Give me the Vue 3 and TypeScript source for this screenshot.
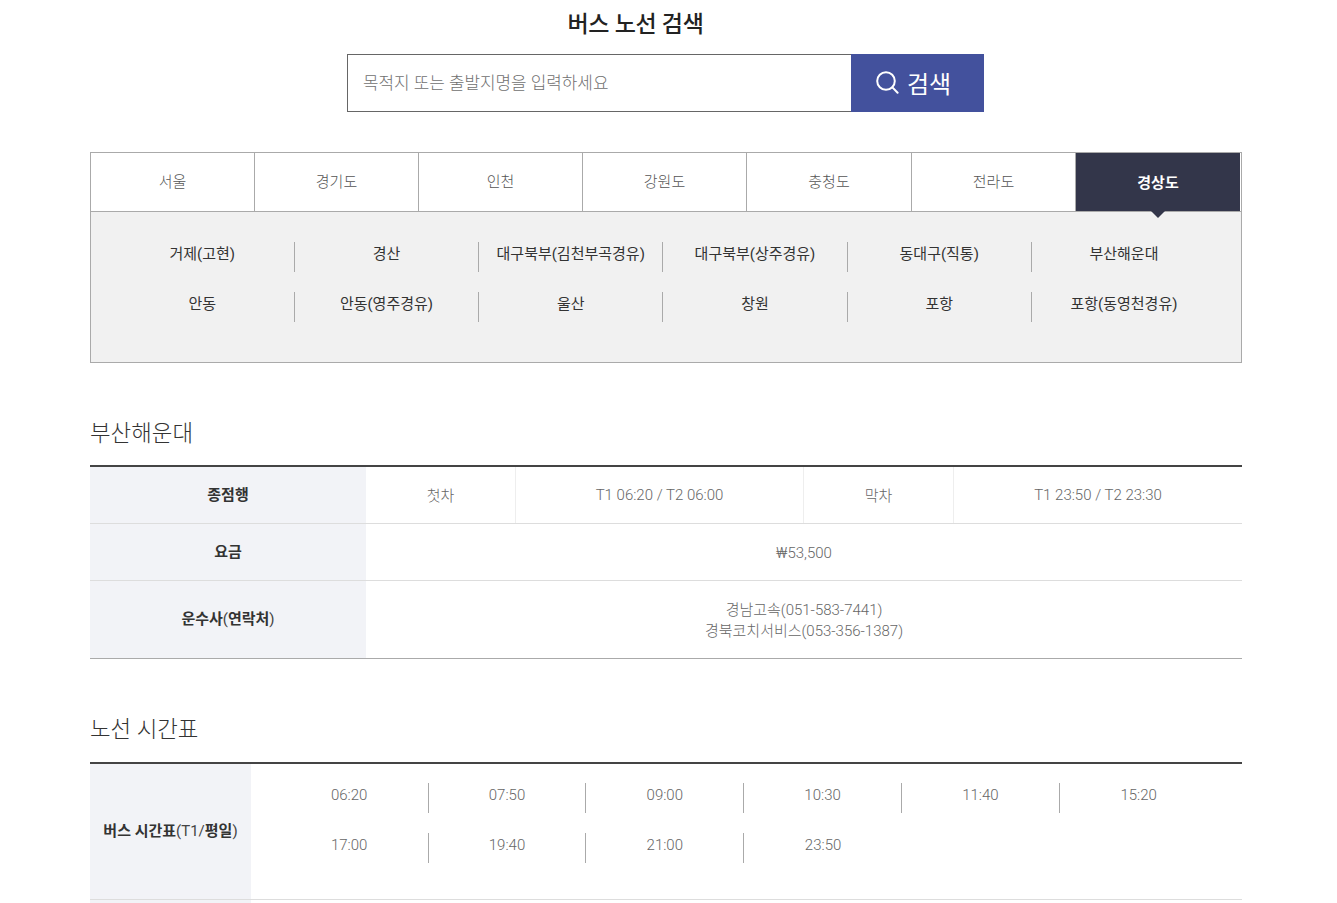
<script setup lang="ts">
const regions: string[] = ['서울', '경기도', '인천', '강원도', '충청도', '전라도', '경상도']
const activeRegion = '경상도'
const routes: string[] = [
  '거제(고현)', '경산', '대구북부(김천부곡경유)', '대구북부(상주경유)', '동대구(직통)', '부산해운대',
  '안동', '안동(영주경유)', '울산', '창원', '포항', '포항(동영천경유)'
]
const times: string[] = ['06:20', '07:50', '09:00', '10:30', '11:40', '15:20', '17:00', '19:40', '21:00', '23:50']
</script>

<template>
  <div class="page">
    <h1 class="title">버스 노선 검색</h1>
    <form class="search" @submit.prevent>
      <input class="search-input" type="text" placeholder="목적지 또는 출발지명을 입력하세요" />
      <button class="search-btn" type="submit">
        <svg width="24" height="24" viewBox="0 0 24 24" fill="none" stroke="#fff" stroke-width="2">
          <circle cx="11" cy="11" r="8.8" />
          <path d="M17.4 17.4 L22.6 22.8" stroke-linecap="round" />
        </svg>
        <span>검색</span>
      </button>
    </form>

    <section class="picker">
      <ul class="tabs">
        <li v-for="r in regions" :key="r" class="tab" :class="{ active: r === activeRegion }">{{ r }}</li>
      </ul>
      <ul class="routes">
        <li v-for="(r, i) in routes" :key="r" class="route" :class="{ last: (i + 1) % 6 === 0 }">{{ r }}</li>
      </ul>
    </section>

    <h2 class="heading first">부산해운대</h2>
    <div class="info">
      <div class="row three">
        <div class="th">종점행</div>
        <div class="td bordered hangul">첫차</div>
        <div class="td bordered">T1 06:20 / T2 06:00</div>
        <div class="td bordered hangul">막차</div>
        <div class="td">T1 23:50 / T2 23:30</div>
      </div>
      <div class="row">
        <div class="th">요금</div>
        <div class="td lowered">₩53,500</div>
      </div>
      <div class="row tall">
        <div class="th"><span>운수사<i>(</i>연락처<i>)</i></span></div>
        <div class="td stack lowered">
          <span>경남고속(051-583-7441)</span>
          <span>경북코치서비스(053-356-1387)</span>
        </div>
      </div>
    </div>

    <h2 class="heading second">노선 시간표</h2>
    <div class="schedule">
      <div class="sched-row">
        <div class="th"><span>버스 시간표<i>(T1/</i>평일<i>)</i></span></div>
        <ul class="times">
          <li v-for="(t, i) in times" :key="t" class="time" :class="{ last: (i + 1) % 6 === 0 || i === times.length - 1 }">{{ t }}</li>
        </ul>
      </div>
      <div class="sched-row">
        <div class="th"></div>
        <div></div>
      </div>
    </div>
  </div>
</template>

<style>
html, body { overflow: hidden; background: #fff; }
</style>

<style scoped>
* { box-sizing: border-box; }
ul { list-style: none; margin: 0; padding: 0; }
.page {
  width: 1152px;
  height: 903px;
  margin-left: 90px;
  overflow: hidden;
  font-family: Roboto, "Noto Sans CJK KR", sans-serif;
  font-size: 15px;
  font-weight: 300;
  color: #444;
}
.title {
  margin: 0;
  padding-right: 61px;
  height: 54px;
  padding-top: 8px;
  font-size: 23px;
  letter-spacing: -0.3px;
  line-height: 34px;
  font-weight: 500;
  color: #222;
  text-align: center;
}
.search {
  display: flex;
  width: 637px;
  height: 58px;
  margin-left: 257px;
}
.search-input {
  flex: 1;
  min-width: 0;
  border: 1px solid #666;
  border-right: 0;
  outline: 0;
  padding: 0 15px 1px;
  font: inherit;
  font-size: 16.9px;
  color: #333;
  background: #fff;
}
.search-input::placeholder { color: #707070; opacity: 1; }
.search-btn {
  width: 133px;
  display: flex;
  align-items: center;
  justify-content: center;
  gap: 8px;
  border: 0;
  padding: 0 9px 2px 0;
  background: #43519d;
  color: #fff;
  font: inherit;
  font-size: 24px;
  font-weight: 400;
}
.picker {
  margin-top: 40px;
  border: 1px solid #aaa;
  background: #f1f1f1;
  height: 211px;
}
.tabs {
  display: grid;
  grid-template-columns: 164px 164px 164px 164px 165px 164px 1fr;
  height: 59px;
  background: #fff;
  border-bottom: 1px solid #aaa;
}
.tab {
  display: flex;
  align-items: center;
  justify-content: center;
  border-right: 1px solid #aaa;
  color: #555;
  padding-bottom: 4px;
}
.tab:last-child { border-right: 0; margin-right: 1px; }
.tab.active {
  position: relative;
  background: #33364a;
  color: #fff;
  font-weight: 700;
  padding-bottom: 2px;
}
.tab.active::after {
  content: "";
  position: absolute;
  left: 50%;
  top: 100%;
  margin-left: -7px;
  border: 7px solid transparent;
  border-bottom: 0;
  border-top-color: #33364a;
}
.routes {
  display: grid;
  grid-template-columns: repeat(6, 184.25px);
  row-gap: 20px;
  padding: 30px 0 0 19.6px;
}
.route {
  height: 30px;
  display: flex;
  align-items: center;
  justify-content: center;
  padding-bottom: 10px;
  color: #333;
  font-weight: 400;
  border-right: 1px solid #aaa;
}
.route.last { border-right: 0; }
.heading {
  margin: 0;
  font-size: 22.4px;
  line-height: 34px;
  font-weight: 300;
  color: #333;
}
.heading.first { margin-top: 53px; }
.heading.second { margin-top: 53px; }
.info {
  margin-top: 15px;
  border-top: 2px solid #444;
  border-bottom: 1px solid #aaa;
}
.row {
  display: grid;
  grid-template-columns: 276px 1fr;
  height: 57px;
  border-bottom: 1px solid #ddd;
}
.row.three { grid-template-columns: 276px 150px 288px 150px 1fr; }
.row.tall { height: 77px; border-bottom: 0; }
.th {
  display: flex;
  align-items: center;
  justify-content: center;
  background: #f2f3f7;
  font-weight: 700;
  color: #333;
  padding-bottom: 3px;
}
.row.tall .th { padding-bottom: 5px; }
.sched-row .th { padding-bottom: 5px; }
.th i { font-style: normal; font-weight: 400; color: #444; }
.td {
  display: flex;
  align-items: center;
  justify-content: center;
  color: #666;
}
.td.hangul { padding-bottom: 2px; }
.td.lowered { padding-top: 2px; }
.td.bordered { border-right: 1px solid #eee; }
.td.stack { flex-direction: column; line-height: 21px; }
.schedule {
  margin-top: 16px;
  border-top: 2px solid #444;
}
.sched-row {
  display: grid;
  grid-template-columns: 161px 1fr;
  height: 136px;
  border-bottom: 1px solid #ddd;
}
.times {
  display: grid;
  grid-template-columns: repeat(6, 157.8px);
  grid-auto-rows: 30px;
  row-gap: 20px;
  padding: 19px 0 0 19.8px;
}
.time {
  display: flex;
  align-items: center;
  justify-content: center;
  padding-bottom: 6px;
  color: #666;
  border-right: 1px solid #aaa;
}
.time.last { border-right: 0; }
</style>
